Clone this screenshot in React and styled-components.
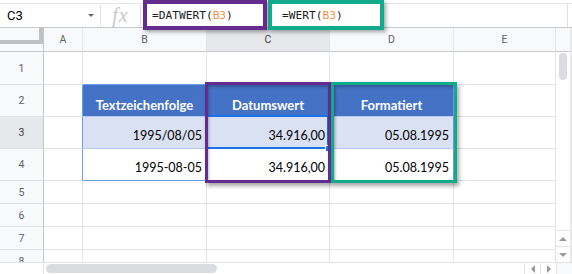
import React from 'react';
import styled, {createGlobalStyle, css} from 'styled-components';

const GlobalStyle = createGlobalStyle`
  html, body {
    margin: 0;
    padding: 0;
    background: #ffffff;
  }
  body {
    font-family: Roboto, 'Liberation Sans', sans-serif;
  }
`;

const columns = [
  {key: 'A', width: 39},
  {key: 'B', width: 124},
  {key: 'C', width: 123},
  {key: 'D', width: 124},
  {key: 'E', width: 102},
];

const rowHeights = [33, 32, 32, 32, 23, 23, 23, 23];

// table content, keyed by row number then column letter
const cells = {
  2: {B: 'Textzeichenfolge', C: 'Datumswert', D: 'Formatiert'},
  3: {B: '1995/08/05', C: '34.916,00', D: '05.08.1995'},
  4: {B: '1995-08-05', C: '34.916,00', D: '05.08.1995'},
};

const GRID = '#e2e3e3';
const HEAD_LINE = '#c7c7c7';
const TABLE_EDGE = '#6d9eeb';
const TABLE_INNER = '#b7cbef';

const inTable = (row, col) => row >= 2 && row <= 4 && ['B', 'C', 'D'].includes(col);

const Sheet = styled.div`
  position: relative;
  width: 572px;
  height: 274px;
  overflow: hidden;
  display: flex;
  flex-direction: column;
  background: #ffffff;
`;

const FormulaBar = styled.div`
  height: 28px;
  box-sizing: border-box;
  padding-top: 3px;
  border-bottom: 1px solid ${HEAD_LINE};
  display: flex;
  flex-shrink: 0;
`;

const BarRow = styled.div`
  flex: 1;
  display: flex;
  align-items: center;
  border-top: 1px solid #e6e6e6;
`;

const NameBox = styled.div`
  width: 100px;
  box-sizing: border-box;
  display: flex;
  align-items: center;
  justify-content: space-between;
  padding: 0 6px 0 7px;
  font-size: 13px;
  color: #000000;
`;

const Caret = styled.span`
  width: 0;
  height: 0;
  border-left: 3px solid transparent;
  border-right: 3px solid transparent;
  border-top: 3px solid #666666;
`;

const Divider = styled.span`
  width: 1px;
  height: 21px;
  background: #e0e0e0;
`;

const FxMark = styled.div`
  width: 39px;
  text-align: center;
  font-family: 'Liberation Serif', serif;
  font-style: italic;
  font-size: 20px;
  color: #c8c8c8;
  letter-spacing: 1px;
`;

const FormulaField = styled.div`
  flex: 1;
  align-self: stretch;
  display: flex;
  align-items: flex-start;
  border-right: 1px solid #e0e0e0;
  margin-right: 4px;
`;

const FormulaChip = styled.div`
  position: relative;
  z-index: 3;
  box-sizing: border-box;
  width: ${p => p.$width}px;
  height: 30px;
  margin: -4px 0 0 ${p => p.$offset}px;
  padding-left: ${p => p.$indent}px;
  border: 4px solid ${p => p.$color};
  background: #ffffff;
  box-shadow: 2px 2px 4px rgba(0, 0, 0, 0.35);
  display: flex;
  align-items: center;
  font-family: 'DejaVu Sans Mono', 'Liberation Mono', monospace;
  font-size: 11.2px;
  color: #222222;
  white-space: nowrap;
`;

const Ref = styled.span`
  color: #f2954e;
`;

const Body = styled.div`
  flex: 1;
  display: flex;
  min-height: 0;
`;

const GridArea = styled.div`
  width: 556px;
  overflow: hidden;
  display: grid;
  grid-template-columns: 44px ${columns.map(c => `${c.width}px`).join(' ')};
  grid-template-rows: 24px ${rowHeights.map(h => `${h}px`).join(' ')};
  align-content: start;
`;

const Corner = styled.div`
  box-sizing: border-box;
  background: #f8f9fa;
  border-right: 1px solid ${HEAD_LINE};
  border-bottom: 1px solid ${HEAD_LINE};
`;

const FreezeBars = styled.div`
  box-sizing: border-box;
  height: 16px;
  border-right: 4px solid #c1c1c1;
  border-bottom: 4px solid #c1c1c1;
`;

const ColHead = styled.div`
  box-sizing: border-box;
  display: flex;
  align-items: center;
  justify-content: center;
  background: ${p => (p.$active ? '#e6e8eb' : '#f8f9fa')};
  border-right: 1px solid ${GRID};
  border-bottom: 1px solid ${HEAD_LINE};
  font-size: 10.5px;
  color: ${p => (p.$active ? '#3c4043' : '#5f6368')};
`;

const RowHead = styled.div`
  box-sizing: border-box;
  display: flex;
  align-items: center;
  justify-content: center;
  background: ${p => (p.$active ? '#e6e8eb' : '#f8f9fa')};
  border-right: 1px solid ${HEAD_LINE};
  border-bottom: 1px solid ${GRID};
  font-size: 10.5px;
  color: ${p => (p.$active ? '#3c4043' : '#5f6368')};
`;

const Cell = styled.div`
  position: relative;
  box-sizing: border-box;
  display: flex;
  align-items: flex-end;
  justify-content: flex-end;
  padding: 0 4px 4px;
  border-right: 1px solid ${p => p.$right};
  border-bottom: 1px solid ${p => p.$bottom};
  font-family: Lato, Calibri, 'Liberation Sans', sans-serif;
  font-size: 12.5px;
  line-height: 16px;
  color: #000000;
  white-space: nowrap;
  ${p =>
    p.$kind === 'head' &&
    css`
      background: #4472c4;
      color: #ffffff;
      font-weight: 700;
      font-size: 13px;
      justify-content: center;
      padding-bottom: 3px;
    `}
  ${p =>
    p.$kind === 'band' &&
    css`
      background: #d9e1f2;
    `}
  ${p =>
    p.$selected &&
    css`
      &::after {
        content: '';
        position: absolute;
        top: -2px;
        left: -1px;
        right: 0;
        bottom: -1px;
        border: 2px solid #1a73e8;
      }
      &::before {
        content: '';
        position: absolute;
        z-index: 1;
        right: -3px;
        bottom: -4px;
        width: 5px;
        height: 5px;
        background: #1a73e8;
        border: 1px solid #ffffff;
      }
    `}
`;

const VScroll = styled.div`
  width: 16px;
  box-sizing: border-box;
  border-right: 2px solid #e9e9e9;
  display: flex;
  flex-direction: column;
`;

const VScrollHead = styled.div`
  height: 24px;
  box-sizing: border-box;
  background: #f8f9fa;
  border-bottom: 1px solid ${HEAD_LINE};
`;

const VThumb = styled.div`
  width: 8px;
  height: 27px;
  margin: 1px 0 0 3px;
  border-radius: 4px;
  background: #dadce0;
`;

const Spacer = styled.div`
  flex: 1;
`;

const ArrowButton = styled.div`
  box-sizing: border-box;
  width: ${p => (p.$horizontal ? '16px' : '100%')};
  height: ${p => (p.$horizontal ? '100%' : '16px')};
  display: flex;
  align-items: center;
  justify-content: center;
  ${p => (p.$horizontal ? 'border-left' : 'border-top')}: 1px solid #e3e3e3;
`;

const Tri = styled.span`
  width: 0;
  height: 0;
  ${p => {
    switch (p.$dir) {
      case 'up':
        return 'border-left: 4px solid transparent; border-right: 4px solid transparent; border-bottom: 4px solid #9a9a9a;';
      case 'down':
        return 'border-left: 4px solid transparent; border-right: 4px solid transparent; border-top: 4px solid #9a9a9a;';
      case 'left':
        return 'border-top: 4px solid transparent; border-bottom: 4px solid transparent; border-right: 4px solid #9a9a9a;';
      default:
        return 'border-top: 4px solid transparent; border-bottom: 4px solid transparent; border-left: 4px solid #9a9a9a;';
    }
  }}
`;

const HScroll = styled.div`
  height: 12px;
  flex-shrink: 0;
  box-sizing: border-box;
  border-top: 1px solid #e3e3e3;
  display: flex;
  align-items: center;
`;

const HScrollLead = styled.div`
  width: 44px;
  height: 100%;
  box-sizing: border-box;
  border-right: 1px solid #e3e3e3;
`;

const HThumb = styled.div`
  width: 171px;
  height: 9px;
  margin-left: 2px;
  border-radius: 5px;
  background: #dadce0;
`;

const HCorner = styled.div`
  width: 16px;
  height: 100%;
  box-sizing: border-box;
  border-left: 1px solid #e3e3e3;
  background: #f8f9fa;
`;

// the coloured frames drawn over the sheet to point out the two formulas
const Callout = styled.div`
  position: absolute;
  z-index: 4;
  box-sizing: border-box;
  left: ${p => p.$x}px;
  top: ${p => p.$y}px;
  width: ${p => p.$w}px;
  height: ${p => p.$h}px;
  border: 3px solid ${p => p.$color};
  box-shadow: 2px 3px 4px rgba(0, 0, 0, 0.35), inset 1px 2px 3px rgba(0, 0, 0, 0.25);
  pointer-events: none;
`;

const PURPLE = '#652c8f';
const GREEN = '#13aa8b';

const cellLines = (row, col, nextCol) => {
  const here = inTable(row, col);
  const right = here || inTable(row, nextCol) ? (here && inTable(row, nextCol) ? TABLE_INNER : TABLE_EDGE) : GRID;
  const below = inTable(row + 1, col);
  const bottom = here || below ? (here && below ? TABLE_INNER : TABLE_EDGE) : GRID;
  return {right, bottom};
};

const App = () => (
  <>
    <GlobalStyle />
    <Sheet>
      <FormulaBar>
        <BarRow>
          <NameBox>
            C3
            <Caret />
          </NameBox>
          <Divider />
          <FxMark>fx</FxMark>
          <Divider />
          <FormulaField>
            <FormulaChip $color={PURPLE} $width={124} $offset={2} $indent={5}>
              =DATWERT(<Ref>B3</Ref>)
            </FormulaChip>
            <FormulaChip $color={GREEN} $width={116} $offset={1} $indent={10}>
              =WERT(<Ref>B3</Ref>)
            </FormulaChip>
          </FormulaField>
        </BarRow>
      </FormulaBar>

      <Body>
        <GridArea>
          <Corner>
            <FreezeBars />
          </Corner>
          {columns.map(c => (
            <ColHead key={c.key} $active={c.key === 'C'}>
              {c.key}
            </ColHead>
          ))}
          {rowHeights.map((_, i) => {
            const row = i + 1;
            return (
              <React.Fragment key={row}>
                <RowHead $active={row === 3}>{row}</RowHead>
                {columns.map((c, ci) => {
                  const next = columns[ci + 1] ? columns[ci + 1].key : null;
                  const {right, bottom} = cellLines(row, c.key, next);
                  const kind = inTable(row, c.key) ? (row === 2 ? 'head' : row === 3 ? 'band' : 'plain') : null;
                  return (
                    <Cell
                      key={c.key}
                      $kind={kind}
                      $right={right}
                      $bottom={bottom}
                      $selected={row === 3 && c.key === 'C'}
                    >
                      {cells[row] && cells[row][c.key]}
                    </Cell>
                  );
                })}
              </React.Fragment>
            );
          })}
        </GridArea>
        <VScroll>
          <VScrollHead />
          <VThumb />
          <Spacer />
          <ArrowButton>
            <Tri $dir="up" />
          </ArrowButton>
          <ArrowButton>
            <Tri $dir="down" />
          </ArrowButton>
        </VScroll>
      </Body>

      <HScroll>
        <HScrollLead />
        <HThumb />
        <Spacer />
        <ArrowButton $horizontal>
          <Tri $dir="left" />
        </ArrowButton>
        <ArrowButton $horizontal>
          <Tri $dir="right" />
        </ArrowButton>
        <HCorner />
      </HScroll>

      <Callout $x={205} $y={82} $w={126} $h={101} $color={PURPLE} />
      <Callout $x={331} $y={82} $w={126} $h={101} $color={GREEN} />
    </Sheet>
  </>
);

export default App;
